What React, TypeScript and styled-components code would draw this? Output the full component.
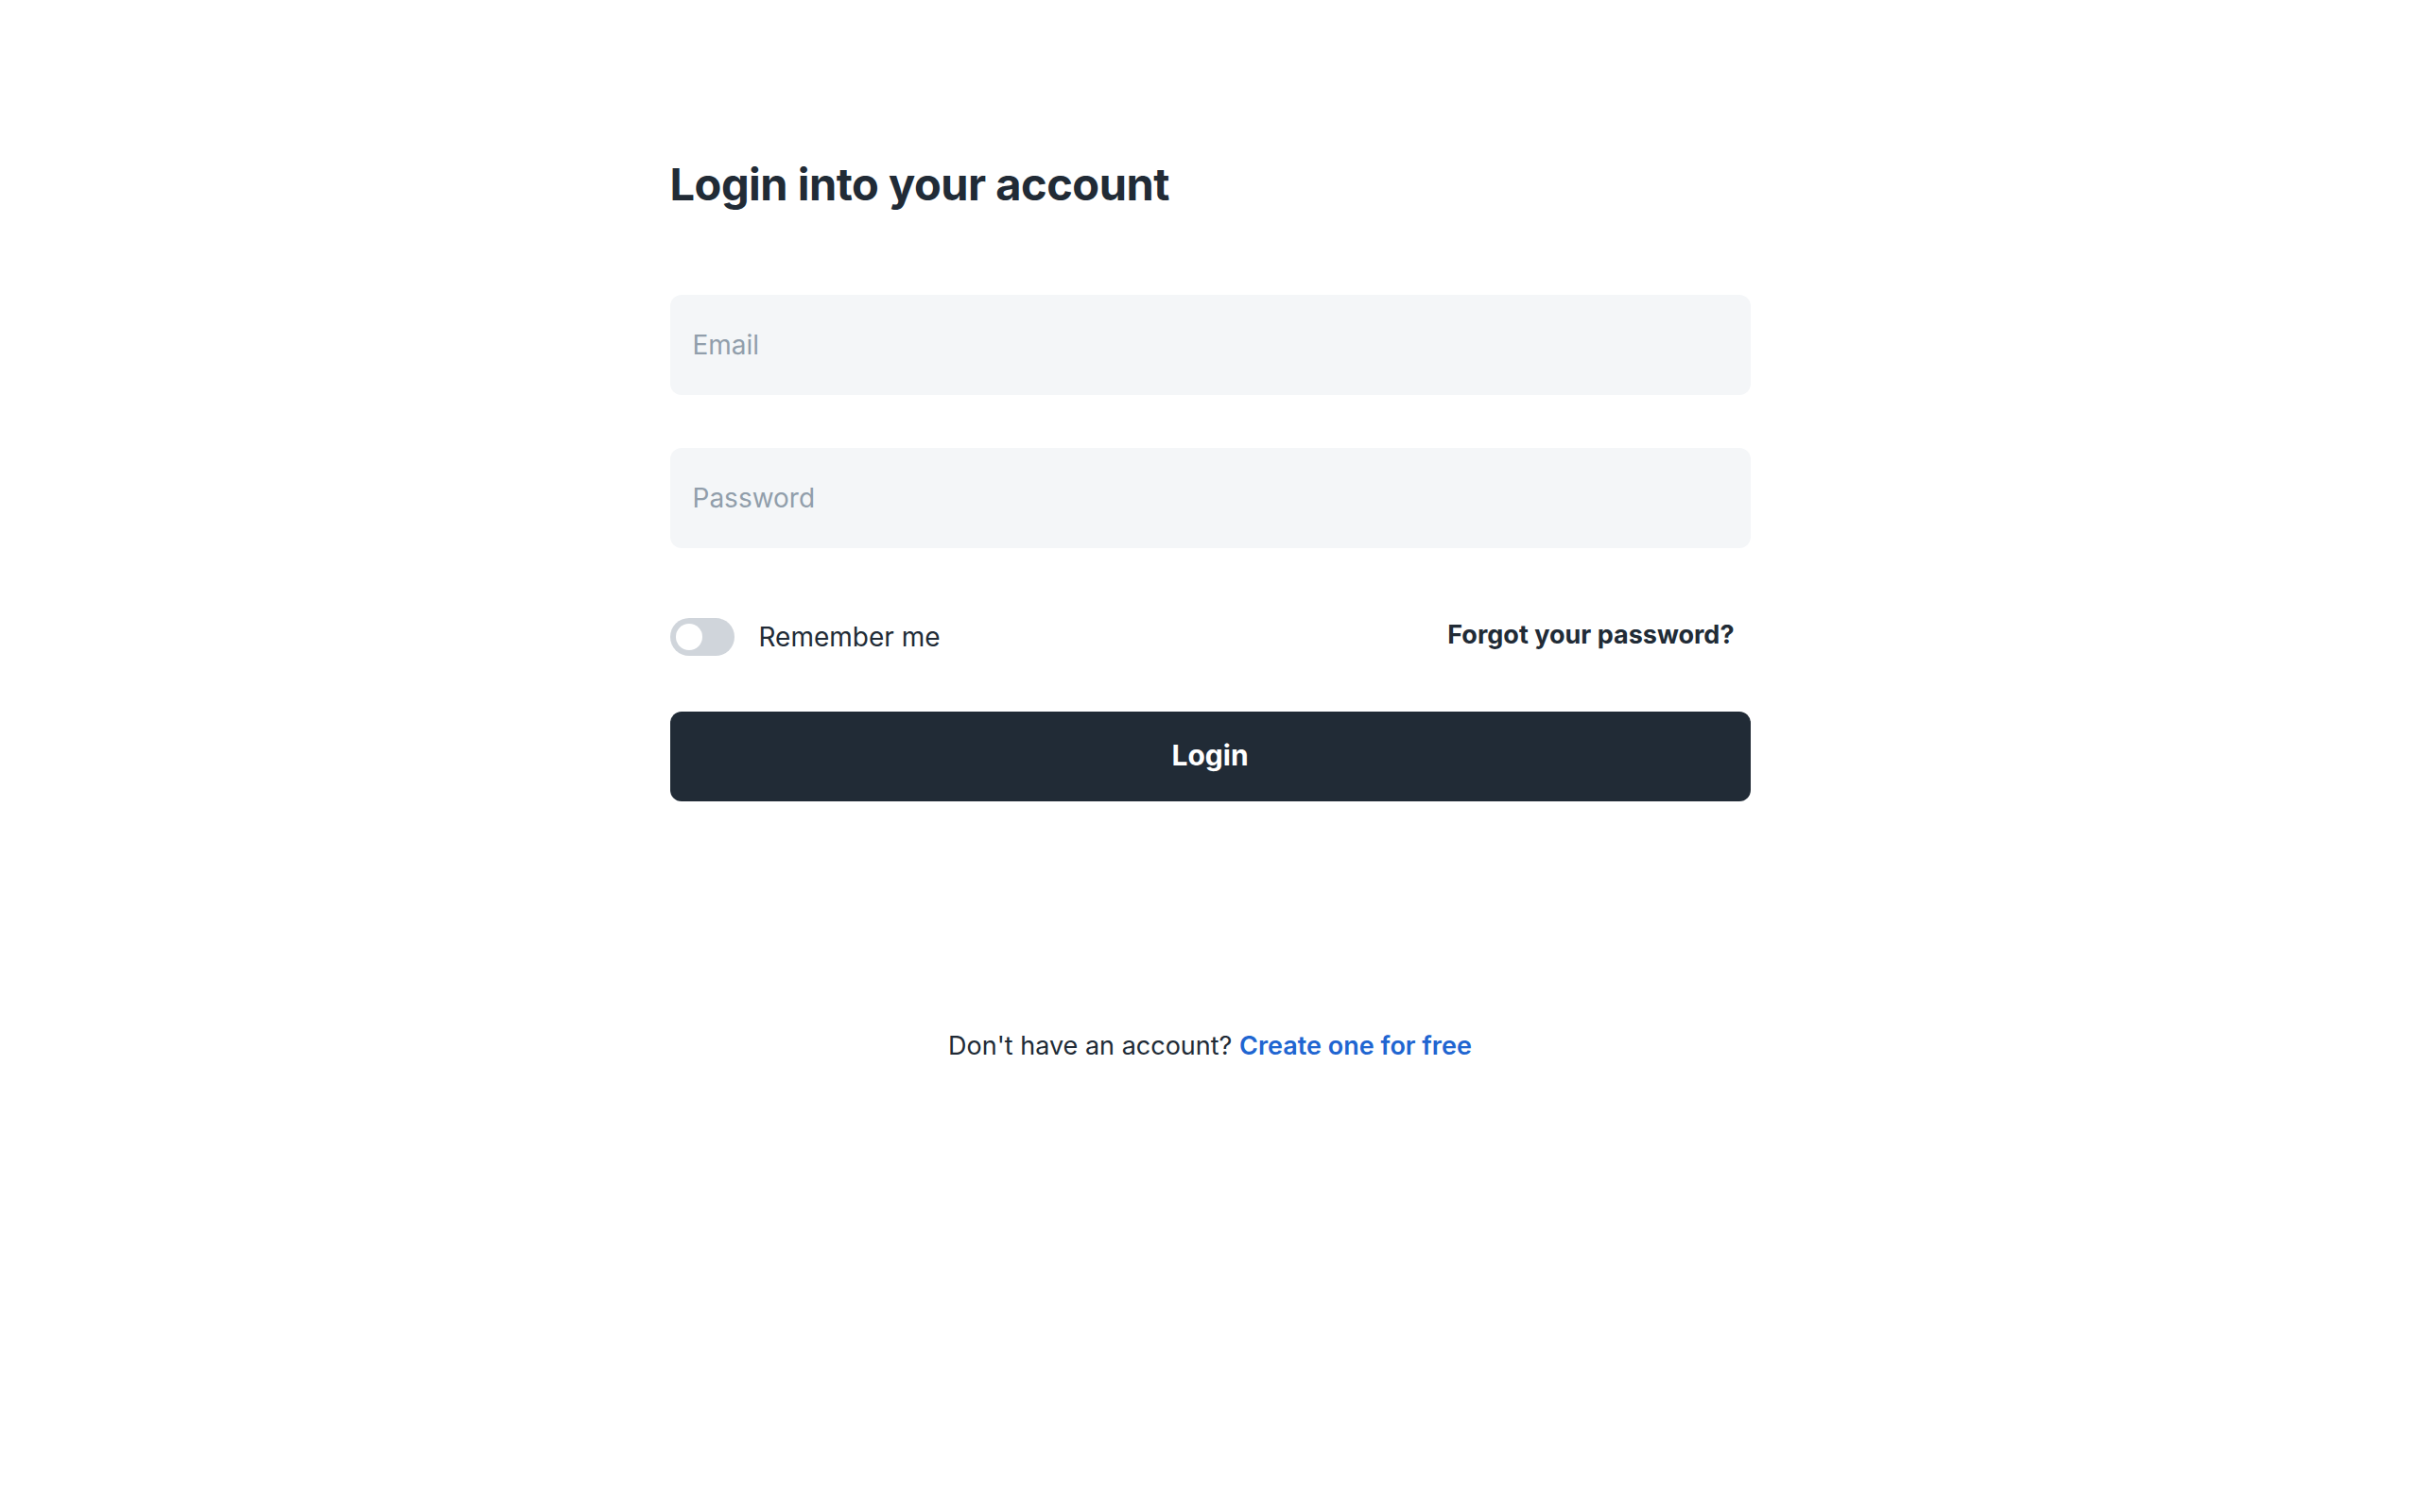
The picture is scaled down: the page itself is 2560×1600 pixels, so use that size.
import styled, { createGlobalStyle } from 'styled-components';

const GlobalStyle = createGlobalStyle`
  html, body {
    margin: 0;
    padding: 0;
    background: #ffffff;
  }
  body {
    font-family: Inter, 'Liberation Sans', sans-serif;
    color: #212b36;
  }
`;

export default function App() {
  return (
    <>
      <GlobalStyle />
      <Page>
        <Container>
          <Title>Login into your account</Title>
          <Form>
            <Field type="email" placeholder="Email" />
            <Field type="password" placeholder="Password" $spaced />
            <OptionsRow>
              <RememberLabel>
                <Toggle>
                  <ToggleKnob />
                </Toggle>
                Remember me
              </RememberLabel>
              <ForgotLink href="#">Forgot your password?</ForgotLink>
            </OptionsRow>
            <SubmitButton type="button">Login</SubmitButton>
          </Form>
          <Footer>
            Don't have an account? <FooterLink href="#">Create one for free</FooterLink>
          </Footer>
        </Container>
      </Page>
    </>
  );
}

const Page = styled.div`
  min-height: 100vh;
  display: flex;
  justify-content: center;
  box-sizing: border-box;
  padding-top: 159px;
`;

const Container = styled.div`
  width: 1143px;
  display: flex;
  flex-direction: column;
`;

const Title = styled.h1`
  margin: 0;
  font-size: 47px;
  line-height: 72px;
  font-weight: 700;
  color: #212b36;
  letter-spacing: -0.5px;
`;

const Form = styled.form`
  margin-top: 81px;
  display: flex;
  flex-direction: column;
`;

const Field = styled.input<{ $spaced?: boolean }>`
  height: 106px;
  box-sizing: border-box;
  margin-top: ${(p) => (p.$spaced ? '56px' : '0')};
  padding: 0 24px;
  border: none;
  border-radius: 12px;
  background: #f4f6f8;
  font-family: inherit;
  font-size: 28px;
  color: #212b36;
  outline: none;

  &::placeholder {
    color: #919eab;
  }
`;

const OptionsRow = styled.div`
  margin-top: 73px;
  height: 41px;
  display: flex;
  align-items: center;
  justify-content: space-between;
  padding-right: 17px;
`;

const RememberLabel = styled.label`
  display: flex;
  align-items: center;
  gap: 26px;
  font-size: 28px;
  line-height: 36px;
  color: #212b36;
`;

const Toggle = styled.span`
  position: relative;
  width: 68px;
  height: 40px;
  border-radius: 20px;
  background: #d0d5db;
  flex-shrink: 0;
`;

const ToggleKnob = styled.span`
  position: absolute;
  top: 6px;
  left: 6px;
  width: 28px;
  height: 28px;
  border-radius: 50%;
  background: #ffffff;
`;

const ForgotLink = styled.a`
  font-size: 27px;
  line-height: 36px;
  font-weight: 700;
  color: #212b36;
  text-decoration: none;
  margin-bottom: 4px;
`;

const SubmitButton = styled.button`
  margin-top: 59px;
  height: 95px;
  padding: 0 0 4px;
  border: none;
  border-radius: 12px;
  background: #212b36;
  color: #ffffff;
  font-family: inherit;
  font-size: 30px;
  font-weight: 700;
  cursor: pointer;
`;

const Footer = styled.p`
  margin: 236px 0 0;
  text-align: center;
  font-size: 27px;
  line-height: 45px;
  color: #212b36;
`;

const FooterLink = styled.a`
  color: #2065d1;
  font-weight: 600;
  text-decoration: none;
`;
